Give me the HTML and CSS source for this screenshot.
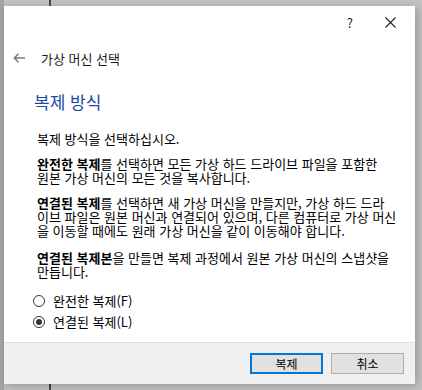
FILE: index.html
```html
<!DOCTYPE html>
<html lang="ko">
<head>
    <meta charset="UTF-8">
    <meta name="viewport" content="width=device-width, initial-scale=1.0">
    <title>복제 방식</title>
    <link rel="stylesheet" href="styles.css">
</head>
<body>
    <div class="dialog">
        <div class="titlebar">
            <span class="help">?</span>
            <span class="close">
                <svg width="11" height="11" viewBox="0 0 11 11"><path d="M0.5 0.5 L10.5 10.5 M10.5 0.5 L0.5 10.5" stroke="#222" stroke-width="1.1" fill="none"/></svg>
            </span>
        </div>

        <div class="nav">
            <svg class="back" width="12" height="10" viewBox="0 0 12 10"><path d="M12 5 H1.5 M5.5 0.8 L1.3 5 L5.5 9.2" stroke="#7b7b7b" stroke-width="1.6" fill="none"/></svg>
            <span class="nav-title">가상 머신 선택</span>
        </div>

        <div class="content">
            <h2>복제 방식</h2>
            <p>복제 방식을 선택하십시오.</p>
            <p><b>완전한 복제</b>를 선택하면 모든 가상 하드 드라이브 파일을 포함한<br>원본 가상 머신의 모든 것을 복사합니다.</p>
            <p><b>연결된 복제</b>를 선택하면 새 가상 머신을 만들지만, 가상 하드 드라<br>이브 파일은 원본 머신과 연결되어 있으며, 다른 컴퓨터로 가상 머신<br>을 이동할 때에도 원래 가상 머신을 같이 이동해야 합니다.</p>
            <p class="last"><b>연결된 복제본</b>을 만들면 복제 과정에서 원본 가상 머신의 스냅샷을<br>만듭니다.</p>

            <div class="options">
                <label class="radio"><span class="dot"></span>완전한 복제(F)</label>
                <label class="radio checked"><span class="dot"></span>연결된 복제(L)</label>
            </div>
        </div>

        <div class="footer">
            <button class="btn default">복제</button>
            <button class="btn">취소</button>
        </div>
    </div>
</body>
</html>
```

FILE: styles.css
```css
body {
    margin: 0;
    height: 390px;
    overflow: hidden;
    background-color: #c4c4c4;
    background-image: linear-gradient(to right, #a6a6a6 4px, transparent 4px, transparent 49px, #4a4a4a 49px, #4a4a4a 51px, transparent 51px);
    padding: 6px 0 0 4px;
    box-sizing: border-box;
    font-family: "Noto Sans CJK KR", "Noto Sans", sans-serif;
    font-size: 13px;
    color: #000;
}

.dialog {
    width: 411px;
    height: 378px;
    background-color: #fff;
    display: flex;
    flex-direction: column;
    box-shadow: 2px 2px 10px rgba(0, 0, 0, 0.25);
}

.titlebar {
    height: 32px;
    display: flex;
    justify-content: flex-end;
    align-items: center;
    padding-right: 19px;
}

.help {
    font-size: 13px;
    margin-right: 32px;
    color: #222;
}

.close svg {
    display: block;
}

.nav {
    height: 40px;
    display: flex;
    align-items: center;
    padding-left: 9px;
}

.back {
    margin-right: 16px;
}

.nav-title {
    font-size: 13px;
    color: #1a1a1a;
}

.content {
    flex: 1;
    padding: 14px 4px 0 33px;
}

.content h2 {
    margin: 0 0 20px -3px;
    font-size: 17px;
    font-weight: normal;
    line-height: 20px;
    color: #1749a6;
}

.content p {
    margin: 0 0 11px;
    line-height: 14px;
    white-space: nowrap;
}

.content p b {
    font-weight: bold;
}

.content p.last {
    margin-top: 13px;
}

.options {
    display: flex;
    flex-direction: column;
    margin-top: 9px;
}

.radio {
    height: 21px;
    display: flex;
    align-items: center;
    margin-left: -4px;
}

.dot {
    width: 12px;
    height: 12px;
    box-sizing: border-box;
    border: 1px solid #333;
    border-radius: 50%;
    margin-right: 8px;
    display: flex;
    justify-content: center;
    align-items: center;
}

.checked .dot::after {
    content: "";
    width: 6px;
    height: 6px;
    border-radius: 50%;
    background-color: #333;
}

.footer {
    height: 42px;
    background-color: #f0f0f0;
    border-top: 1px solid #dfdfdf;
    box-sizing: border-box;
    display: flex;
    justify-content: flex-end;
    align-items: center;
    gap: 8px;
    padding-right: 11px;
}

.btn {
    width: 73px;
    height: 21px;
    font-family: inherit;
    font-size: 12px;
    background-color: #e1e1e1;
    border: 1px solid #adadad;
    padding: 0;
    color: #000;
}

.btn.default {
    border: 2px solid #0078d7;
}
```
